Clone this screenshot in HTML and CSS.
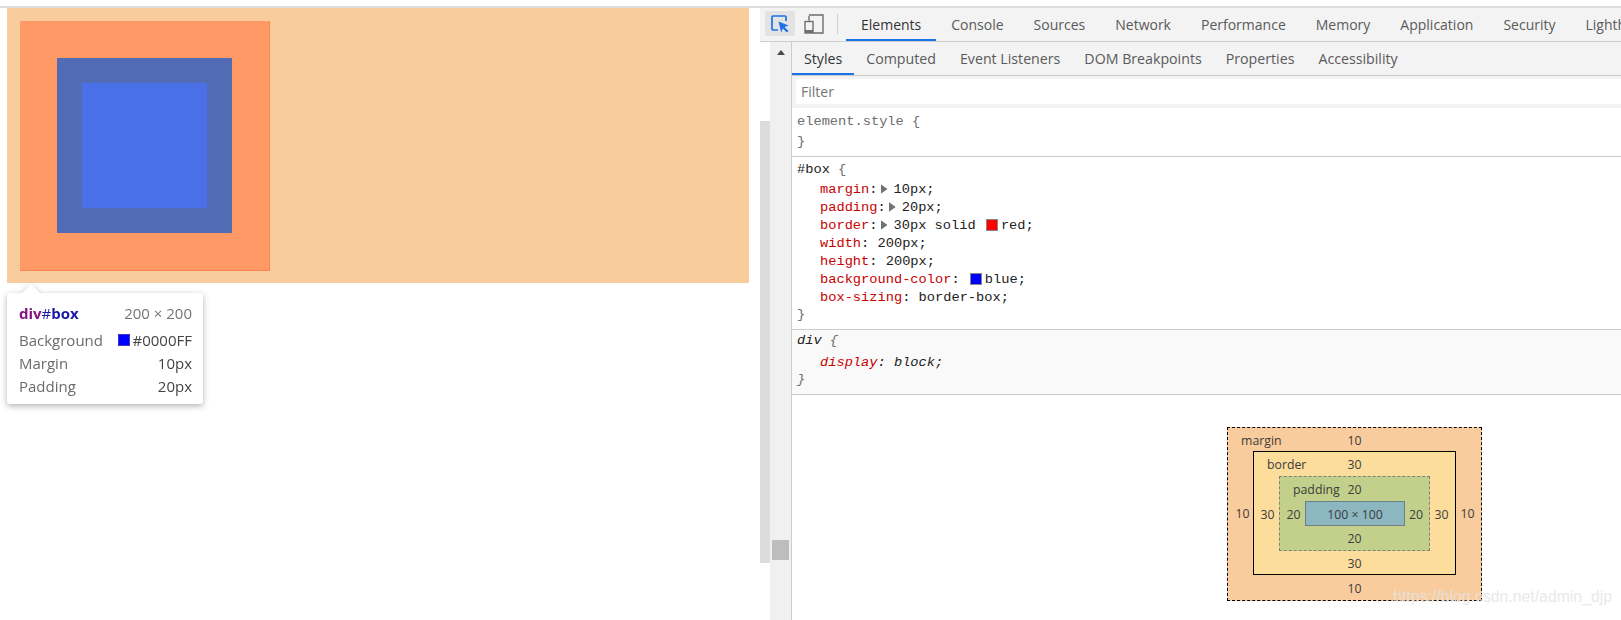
FILE: index.html
```html
<!DOCTYPE html>
<html lang="en">
<head>
<meta charset="utf-8">
<title>DevTools box model</title>
<link rel="stylesheet" href="styles.css">
</head>
<body>
<div class="topline"></div>
<div class="screen">
  <section class="page">
    <div class="viewport">
      <div class="box"><div class="box-padding"><div class="box-content"></div></div></div>
    </div>
    <div class="tip">
      <div class="tip-row tip-title">
        <span class="tip-name"><span class="tag">div</span><span class="hash">#</span><span class="idname">box</span></span>
        <span class="tip-size">200 × 200</span>
      </div>
      <div class="tip-row"><span>Background</span><span class="tip-val"><i class="tip-swatch"></i>#0000FF</span></div>
      <div class="tip-row"><span>Margin</span><span class="tip-val">10px</span></div>
      <div class="tip-row"><span>Padding</span><span class="tip-val">20px</span></div>
    </div>
  </section>
  <section class="devtools">
    <header class="toolbar">
      <button class="tool tool-on" aria-label="Inspect">
        <svg width="18" height="18" viewBox="0 0 18 18"><path d="M7 15H2.2a1.2 1.2 0 0 1-1.2-1.2V2.2A1.2 1.2 0 0 1 2.2 1h11.6A1.2 1.2 0 0 1 15 2.2V6" fill="none" stroke="#1a73e8" stroke-width="1.7"/><path d="M7.5 6.5 17.5 10.5l-4 1.5 4 4-1.6 1.5-4-4-1.7 4z" fill="#1a73e8"/></svg>
      </button>
      <button class="tool tool-device" aria-label="Device">
        <svg width="20" height="20" viewBox="0 0 20 20"><path d="M5 1h14v18H9" fill="none" stroke="#6e6e6e" stroke-width="1.4"/><path d="M5 1.7v5" stroke="#6e6e6e" stroke-width="1.4"/><rect x="1" y="7.5" width="8" height="11.5" fill="none" stroke="#6e6e6e" stroke-width="1.4"/><rect x="1" y="16" width="8" height="3" fill="#6e6e6e"/></svg>
      </button>
      <span class="divider"></span>
      <nav class="tabs">
        <span class="tab tab-on">Elements</span>
        <span class="tab">Console</span>
        <span class="tab">Sources</span>
        <span class="tab">Network</span>
        <span class="tab">Performance</span>
        <span class="tab">Memory</span>
        <span class="tab">Application</span>
        <span class="tab">Security</span>
        <span class="tab">Lighthouse</span>
      </nav>
    </header>
    <div class="panes">
      <div class="track"><div class="track-thumb"></div></div>
      <div class="scroller"><i class="scroll-up"></i><i class="scroll-thumb"></i></div>
      <div class="sidebar">
        <nav class="subtabs">
          <span class="subtab subtab-on">Styles</span>
          <span class="subtab">Computed</span>
          <span class="subtab">Event Listeners</span>
          <span class="subtab">DOM Breakpoints</span>
          <span class="subtab">Properties</span>
          <span class="subtab">Accessibility</span>
        </nav>
        <div class="filter-bar"><div class="filter">Filter</div></div>
        <div class="rule rule-el">
          <div class="sel muted">element.style {</div>
          <div class="end muted">}</div>
        </div>
        <div class="rule rule-box">
          <div class="sel">#box <span class="muted">{</span></div>
          <div class="decl"><span class="prop">margin</span>:<i class="arrow"></i>10px;</div>
          <div class="decl"><span class="prop">padding</span>:<i class="arrow"></i>20px;</div>
          <div class="decl"><span class="prop">border</span>:<i class="arrow"></i>30px solid <i class="swatch swatch-red"></i>red;</div>
          <div class="decl"><span class="prop">width</span>: 200px;</div>
          <div class="decl"><span class="prop">height</span>: 200px;</div>
          <div class="decl"><span class="prop">background-color</span>: <i class="swatch swatch-blue"></i>blue;</div>
          <div class="decl"><span class="prop">box-sizing</span>: border-box;</div>
          <div class="end muted">}</div>
        </div>
        <div class="rule rule-ua">
          <div class="sel">div <span class="muted">{</span></div>
          <div class="decl"><span class="prop">display</span>: block;</div>
          <div class="end muted">}</div>
        </div>
        <div class="metrics">
          <div class="m m-margin">
            <span class="m-label">margin</span><span class="m-top">10</span>
            <span class="m-left">10</span>
            <div class="m m-border">
              <span class="m-label">border</span><span class="m-top">30</span>
              <span class="m-left">30</span>
              <div class="m m-padding">
                <span class="m-label">padding</span><span class="m-top">20</span>
                <span class="m-left">20</span>
                <div class="m-content">100 × 100</div>
                <span class="m-right">20</span>
                <span class="m-bottom">20</span>
              </div>
              <span class="m-right">30</span>
              <span class="m-bottom">30</span>
            </div>
            <span class="m-right">10</span>
            <span class="m-bottom">10</span>
          </div>
        </div>
      </div>
    </div>
    <div class="watermark">https://blog.csdn.net/admin_djp</div>
  </section>
</div>
</body>
</html>
```
FILE: styles.css
```css
* { box-sizing: border-box; }
html, body { margin: 0; height: 100%; overflow: hidden; background: #fff; }
body { font-family: "Open Sans", "Noto Sans", sans-serif; font-size: 14px; color: #333; }
button { border: 0; padding: 0; background: none; }
i { font-style: normal; }

.topline { height: 8px; border-bottom: 2px solid #dcdcdf; }
.screen { display: flex; height: 612px; }

/* inspected page */
.page { position: relative; width: 760px; flex: none; padding-left: 7px; }
.viewport { width: 742px; height: 275px; padding: 13px; background: #f8cc9d; }
.box { width: 250px; height: 250px; padding: 37px; background: #ff9966; border-right: 1px solid #ff8155; border-bottom: 1px solid #ff8155; }
.box-padding { width: 175px; height: 175px; padding: 25px; background: #516bb5; }
.box-content { width: 125px; height: 125px; background: #4a70e8; }

.tip { position: absolute; left: 7px; top: 285px; width: 196px; height: 111px; padding: 9px 11px 0 12px; background: #fff; border-radius: 3px; filter: drop-shadow(0 2px 3px rgba(0,0,0,.3)); color: #6b6b6b; font-size: 15px; }
.tip::before { content: ""; position: absolute; left: 15px; top: -9px; width: 18px; height: 9px; background: #fff; clip-path: polygon(50% 0, 100% 100%, 0 100%); }
.tip-row { display: flex; justify-content: space-between; align-items: center; height: 23px; }
.tip-title { height: 22px; margin-bottom: 4px; }
.tip-name { font-weight: 700; }
.tag { color: #881280; }
.hash { color: #1a1aa6; font-weight: 400; }
.idname { color: #1a1aa6; }
.tip-size { color: #757575; }
.tip-val { display: flex; align-items: center; color: #444; }
.tip-swatch { width: 12px; height: 12px; margin-right: 3px; background: #0000ff; border: 1px solid #3a3ac0; }

/* devtools */
.devtools { position: relative; flex: 1; min-width: 0; display: flex; flex-direction: column; overflow: hidden; }
.toolbar { display: flex; align-items: stretch; height: 34px; padding-left: 5px; background: #f3f3f3; border-bottom: 1px solid #cdcdcd; flex: none; }
.tool { flex: none; width: 30px; height: 25px; margin-top: 3px; display: flex; align-items: center; justify-content: center; border-radius: 2px; }
.tool-device { padding-left: 7px; }
.tool-on { background: #e3e3e3; }
.divider { flex: none; width: 1px; height: 20px; margin: 6px 8px 0 12px; background: #cfcfcf; }
.tabs { display: flex; flex: none; }
.tab { flex: none; padding: 0 15px; height: 33px; line-height: 34px; font-size: 14px; color: #5a5a5a; white-space: nowrap; }
.tab-on { color: #333; border-bottom: 2px solid #1a73e8; }

.panes { display: flex; flex: 1; min-height: 0; }
.track { width: 10px; flex: none; padding-top: 79px; }
.track-thumb { height: 442px; background: #dcdcdc; }
.scroller { position: relative; width: 21px; flex: none; padding: 8px 2px 0; background: #f0f0f0; }
.scroll-up { display: block; width: 0; height: 0; margin: 0 auto; border-left: 4.5px solid transparent; border-right: 4.5px solid transparent; border-bottom: 5px solid #484848; }
.scroll-thumb { display: block; height: 20px; margin-top: 485px; background: #bdbdbd; }

.sidebar { flex: 1; min-width: 0; border-left: 1px solid #cdcdcd; }
.subtabs { display: flex; height: 34px; background: #f3f3f3; border-bottom: 1px solid #cdcdcd; }
.subtab { padding: 0 12px; height: 33px; line-height: 34px; font-size: 14.2px; color: #5a5a5a; white-space: nowrap; }
.subtab-on { color: #333; border-bottom: 2px solid #1a73e8; }

.filter-bar { height: 32px; padding: 3px 0 4px 4px; background: #f3f3f3; }
.filter { height: 25px; padding-left: 5px; line-height: 26px; background: #fff; color: #757575; }

.rule { border-bottom: 1px solid #ccc; font-family: "Liberation Mono", "DejaVu Sans Mono", monospace; font-size: 13.7px; color: #222; }
.rule-el { height: 49px; padding: 4px 0 0 5px; }
.rule-box { height: 173px; padding: 3px 0 0 5px; }
.rule-ua { height: 65px; padding: 1px 0 0 5px; background: #f9f9f9; font-style: italic; }
.sel, .end { height: 20px; line-height: 20px; }
.decl { display: flex; align-items: center; height: 18px; padding-left: 23px; white-space: pre; }
.rule-box .decl:first-of-type { margin-top: 2px; }
.rule-box .end { height: 18px; line-height: 18px; }
.rule-ua .decl { margin-top: 2px; }
.rule-ua .end { height: 18px; line-height: 18px; }
.muted { color: #6e6e6e; }
.prop { color: #c80000; }
.arrow { width: 7px; height: 10px; margin: 0 6px 0 3px; background: #727272; clip-path: polygon(0 0, 100% 50%, 0 100%); }
.swatch { width: 12px; height: 12px; margin: 0 3px 0 2px; border: 1px solid #888; }
.swatch-red { background: #f00; }
.swatch-blue { background: #00f; }

/* box model diagram */
.metrics { padding: 32px 0 0 435px; font-size: 12.3px; color: #3c3c3c; }
.m { display: grid; align-items: center; justify-items: center; line-height: 16px; }
.m > span { padding-top: 2px; }
.m > .m-label, .m > .m-top { grid-row: 1; grid-column: 1 / -1; }
.m > .m-label { justify-self: start; margin-left: 13px; }
.m > .m-left { grid-row: 2; grid-column: 1; margin-left: 2px; }
.m > .m-right { grid-row: 2; grid-column: 3; margin-right: 2px; }
.m > .m-bottom { grid-row: 3; grid-column: 1 / -1; }
.m-margin > .m-left { margin-left: 4px; }
.m-margin > .m-right { margin-right: 2px; }
.m-margin { width: 255px; height: 174px; grid-template: 23px 124px 25px / 25px 203px 25px; background: #f9cc9d; border: 1px dashed #000; }
.m-border { width: 203px; height: 124px; grid-template: 24px 75px 23px / 25px 151px 25px; background: #fddd9b; border: 1px solid #000; }
.m-padding { width: 151px; height: 75px; grid-template: 24px 25px 24px / 25px 100px 24px; background: #c3d08b; border: 1px dashed #808080; }
.m-content { width: 100px; height: 25px; padding-top: 2px; grid-row: 2; grid-column: 2; display: flex; align-items: center; justify-content: center; background: #8cb6c0; border: 1px solid #6d7f88; }

.watermark { position: absolute; right: 9px; top: 579px; font-family: "Liberation Sans", Arial, sans-serif; font-size: 15.8px; line-height: 20px; color: rgba(228,228,228,.85); white-space: nowrap; }
```
